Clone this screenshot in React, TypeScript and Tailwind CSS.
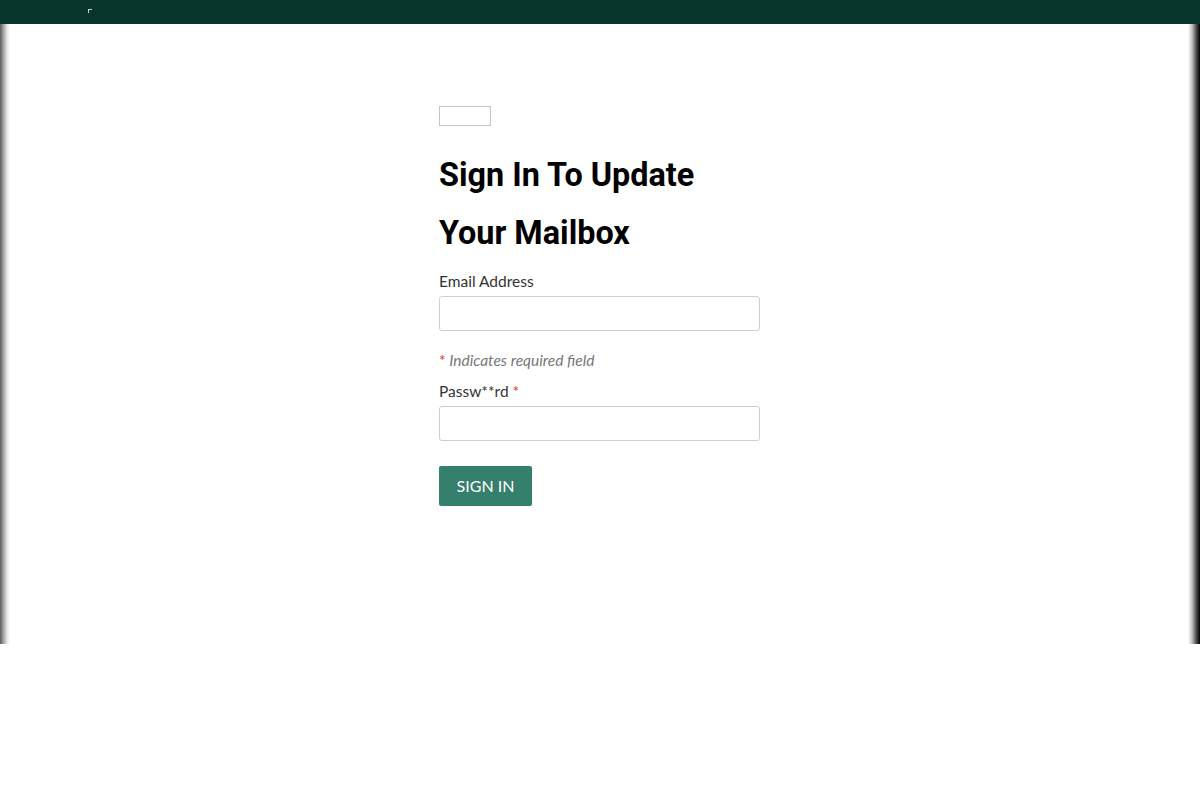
import React from "react";

export default function App() {
  return (
    <div className="min-h-[800px] bg-white" style={{ fontFamily: "Lato, 'Noto Sans', sans-serif" }}>
      <header className="h-[24px] bg-[#07352b] relative">
        <span className="absolute left-[88px] top-[9px] w-[4px] h-[4px] border-t border-l border-[#c9d4d0]" />
      </header>
      <main className="h-[620px] flex bg-white">
        <div className="w-[10px] shrink-0 bg-[linear-gradient(to_right,#5a5a5a,#9a9a9a_30%,#e6e6e6_70%,#ffffff)]" />
        <div className="flex-1">
          <div className="w-[322px] ml-[429px] pt-[82px]">
            <div className="w-[52px] h-[20px] border border-[#c4c4c4]" />
            <h1
              className="mt-[20px] text-[32.4px] leading-[58px] font-bold text-black"
              style={{ fontFamily: "Roboto, sans-serif" }}
            >
              Sign In To Update
              <br />
              Your Mailbox
            </h1>
            <form className="mt-[8px]" onSubmit={(e) => e.preventDefault()}>
              <label className="block text-[15.5px] leading-[22px] text-[#333]">Email Address</label>
              <div className="mt-[4px] w-[321px] h-[35px] border border-[#cfcfcf] rounded-[3px] bg-white" />
              <p className="mt-[18px] text-[15.5px] leading-[22px] italic text-[#777]">
                <span className="text-[#e0342c] not-italic">*</span> Indicates required field
              </p>
              <label className="block mt-[9px] text-[15.5px] leading-[22px] text-[#333]">
                Passw**rd <span className="text-[#e0342c]">*</span>
              </label>
              <div className="mt-[4px] w-[321px] h-[35px] border border-[#cfcfcf] rounded-[3px] bg-white" />
              <button
                type="button"
                className="mt-[25px] w-[93px] h-[40px] bg-[#35806c] text-white text-[16px] rounded-[2px] uppercase"
              >
                Sign In
              </button>
            </form>
          </div>
        </div>
        <div className="w-[12px] shrink-0 bg-[linear-gradient(to_right,#ffffff,#bdbdbd_35%,#4a4a4a_70%,#000000)]" />
      </main>
    </div>
  );
}
